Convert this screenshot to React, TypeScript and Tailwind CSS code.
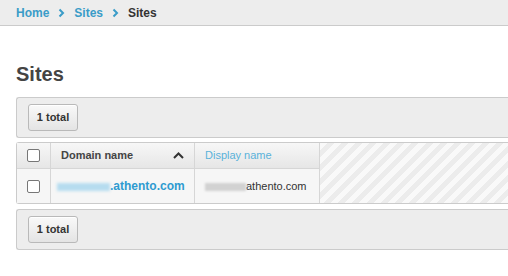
import React from 'react'

const Chevron: React.FC = () => (
  <svg width="7" height="10" viewBox="0 0 7 10" className="mx-[9px]">
    <path d="M1.5 1.5 L5 5 L1.5 8.5" fill="none" stroke="#3a9cc8" strokeWidth="2" />
  </svg>
)

const Checkbox: React.FC = () => (
  <div className="w-[13px] h-[13px] bg-white border border-[#777] rounded-[2px]" />
)

const Toolbar: React.FC = () => (
  <div className="h-[41px] bg-[#ededed] border border-r-0 border-[#cbcbcb] rounded-l-[3px] flex items-center pl-[11px]">
    <button className="h-[27px] w-[50px] border border-[#b9b9b9] rounded-[3px] bg-gradient-to-b from-[#f9f9f9] to-[#e4e4e4] text-[11px] font-bold text-[#333] shadow-[inset_0_1px_0_#fff]">
      1 total
    </button>
  </div>
)

export default function App() {
  return (
    <div className="w-[508px] h-[276px] overflow-hidden bg-white font-['Liberation_Sans',Arial,sans-serif]">
      {/* breadcrumb */}
      <nav className="h-[26px] bg-[#ededed] border-b border-[#cbcbcb] flex items-center pl-4 text-[12px] font-bold">
        <span className="text-[#3a9cc8]">Home</span>
        <Chevron />
        <span className="text-[#3a9cc8]">Sites</span>
        <Chevron />
        <span className="text-[#333]">Sites</span>
      </nav>

      <div className="pl-4 w-[580px]">
        <h1 className="mt-[36px] text-[20px] leading-[24px] font-bold text-[#444]">Sites</h1>

        <div className="mt-[11px]">
          <Toolbar />
        </div>

        {/* table */}
        <div className="mt-[4px] border border-r-0 border-[#cbcbcb] rounded-l-[3px] grid grid-cols-[34px_144px_125px_1fr] grid-rows-[26px_34px]">
          <div className="border-r border-b border-[#d6d6d6] bg-gradient-to-b from-[#f7f7f7] to-[#e6e6e6] flex items-center justify-center">
            <Checkbox />
          </div>
          <div className="border-r border-b border-[#d6d6d6] bg-gradient-to-b from-[#f7f7f7] to-[#e6e6e6] flex items-center justify-between pl-[10px] pr-[10px]">
            <span className="text-[11px] font-bold text-[#444]">Domain name</span>
            <svg width="11" height="7" viewBox="0 0 11 7">
              <path d="M1 6 L5.5 1.5 L10 6" fill="none" stroke="#333" strokeWidth="2" />
            </svg>
          </div>
          <div className="border-r border-b border-[#d6d6d6] bg-gradient-to-b from-[#f7f7f7] to-[#e6e6e6] flex items-center pl-[10px]">
            <span className="text-[11px] text-[#5ab2da]">Display name</span>
          </div>
          <div className="row-span-2 bg-[repeating-linear-gradient(135deg,#f9f9f9_0px,#f9f9f9_5px,#ececec_5px,#ececec_10px)]" />

          <div className="border-r border-[#d6d6d6] bg-[#f6f6f6] flex items-center justify-center">
            <Checkbox />
          </div>
          <div className="border-r border-[#d6d6d6] bg-[#f6f6f6] flex items-center pl-[6px]">
            <span className="w-[53px] h-[8px] mt-[2px] bg-[#b6dcef] blur-[1.5px]" />
            <span className="text-[12px] font-bold text-[#2e9bd0]">.athento.com</span>
          </div>
          <div className="border-r border-[#d6d6d6] bg-[#f6f6f6] flex items-center pl-[10px]">
            <span className="w-[41px] h-[8px] mt-[2px] bg-[#d2d2d2] blur-[1px]" />
            <span className="text-[11px] text-[#333]">athento.com</span>
          </div>
        </div>

        <div className="mt-[5px]">
          <Toolbar />
        </div>
      </div>
    </div>
  )
}
